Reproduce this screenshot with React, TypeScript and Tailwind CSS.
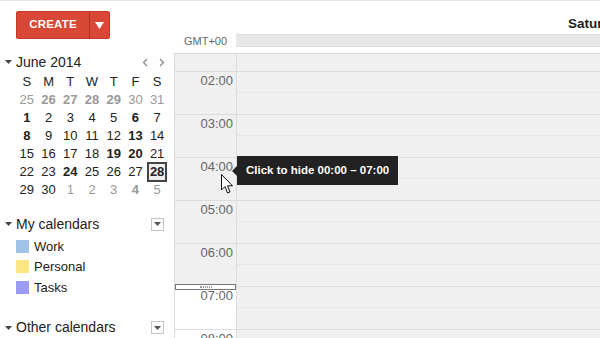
export default function App() {
  const prev = [25, 26, 27, 28, 29, 30, 31];
  const weeks: { d: number; muted?: boolean; bold?: boolean; today?: boolean }[][] = [
    prev.map((d) => ({ d, muted: true, bold: d >= 26 && d <= 29 })),
    [1, 2, 3, 4, 5, 6, 7].map((d) => ({ d, bold: d === 1 || d === 6 })),
    [8, 9, 10, 11, 12, 13, 14].map((d) => ({ d, bold: d === 8 || d === 13 })),
    [15, 16, 17, 18, 19, 20, 21].map((d) => ({ d, bold: d === 19 || d === 20 })),
    [22, 23, 24, 25, 26, 27, 28].map((d) => ({ d, bold: d === 24 || d === 28, today: d === 28 })),
    [
      { d: 29 },
      { d: 30 },
      { d: 1, muted: true },
      { d: 2, muted: true },
      { d: 3, muted: true },
      { d: 4, muted: true, bold: true },
      { d: 5, muted: true },
    ],
  ];
  const hours = ['02:00', '03:00', '04:00', '05:00', '06:00', '07:00', '08:00'];

  return (
    <div className="w-[600px] h-[338px] overflow-hidden bg-white border-t border-[#e5e5e5] flex font-['Liberation_Sans',Arial,sans-serif] text-[#222]">
      {/* sidebar */}
      <div className="w-[174px] shrink-0 flex flex-col">
        <div className="pl-[16px] pt-[10px]">
          <div className="flex w-[94px] h-[28px] rounded-[2px] bg-[#d94836] border border-[#c53727] text-white">
            <div className="w-[72px] flex items-center justify-center text-[11.5px] font-bold tracking-[0.2px]">CREATE</div>
            <div className="flex-1 border-l border-[#b0301f] flex items-center justify-center">
              <svg width="9" height="7" viewBox="0 0 9 7">
                <path d="M0 0 H9 L4.5 7 Z" fill="#fff" />
              </svg>
            </div>
          </div>
        </div>

        <div className="mt-[14px] flex items-center h-[18px]">
          <svg className="ml-[5px] mr-[4px]" width="7" height="4" viewBox="0 0 7 4">
            <path d="M0 0 H7 L3.5 4 Z" fill="#444" />
          </svg>
          <span className="text-[14px]">June 2014</span>
          <div className="ml-auto mr-[9px] flex gap-[11px] items-center">
            <svg width="6" height="9" viewBox="0 0 6 9">
              <path d="M5 1 L1.5 4.5 L5 8" stroke="#888" strokeWidth="1.3" fill="none" />
            </svg>
            <svg width="6" height="9" viewBox="0 0 6 9">
              <path d="M1 1 L4.5 4.5 L1 8" stroke="#888" strokeWidth="1.3" fill="none" />
            </svg>
          </div>
        </div>

        <div className="ml-[16px] w-[152px] mt-[1px] text-[13px]">
          <div className="grid grid-cols-7 h-[18px] items-center text-center">
            {['S', 'M', 'T', 'W', 'T', 'F', 'S'].map((d, i) => (
              <span key={i}>{d}</span>
            ))}
          </div>
          {weeks.map((w, i) => (
            <div key={i} className="grid grid-cols-7 h-[18px] items-center text-center">
              {w.map((c, j) => (
                <span
                  key={j}
                  className={
                    (c.muted ? 'text-[#999] ' : 'text-[#222] ') +
                    (c.bold ? 'font-bold ' : '') +
                    (c.today ? 'border-2 border-[#444] bg-[#eeeeee] h-[20px] leading-[16px] mx-[1px]' : '')
                  }
                >
                  {c.d}
                </span>
              ))}
            </div>
          ))}
        </div>

        <div className="mt-[17px] flex items-center h-[18px]">
          <svg className="ml-[5px] mr-[4px]" width="7" height="4" viewBox="0 0 7 4">
            <path d="M0 0 H7 L3.5 4 Z" fill="#444" />
          </svg>
          <span className="text-[14px]">My calendars</span>
          <div className="ml-auto mr-[10px] w-[13px] h-[13px] border border-[#c4c4c4] flex items-center justify-center">
            <svg width="7" height="4" viewBox="0 0 7 4">
              <path d="M0 0 H7 L3.5 4 Z" fill="#555" />
            </svg>
          </div>
        </div>
        <div className="mt-[3px] flex flex-col text-[13px]">
          {[
            ['Work', 'bg-[#a2c4ea]'],
            ['Personal', 'bg-[#fbe683]'],
            ['Tasks', 'bg-[#9b9cf8]'],
          ].map(([n, c]) => (
            <div key={n} className="flex items-center h-[20.5px] pl-[16px]">
              <span className={'w-[13px] h-[13px] mr-[5px] ' + c} />
              <span>{n}</span>
            </div>
          ))}
        </div>

        <div className="mt-[21px] flex items-center h-[18px]">
          <svg className="ml-[5px] mr-[4px]" width="7" height="4" viewBox="0 0 7 4">
            <path d="M0 0 H7 L3.5 4 Z" fill="#444" />
          </svg>
          <span className="text-[14px]">Other calendars</span>
          <div className="ml-auto mr-[10px] w-[13px] h-[13px] border border-[#c4c4c4] flex items-center justify-center">
            <svg width="7" height="4" viewBox="0 0 7 4">
              <path d="M0 0 H7 L3.5 4 Z" fill="#555" />
            </svg>
          </div>
        </div>
      </div>

      {/* day view */}
      <div className="flex-1 flex flex-col min-w-0">
        <div className="h-[32px] shrink-0 flex">
          <div className="w-[62px] shrink-0" />
          <div className="pl-[332px] pt-[13px] text-[13.5px] font-bold whitespace-nowrap">Saturday 6/28</div>
        </div>
        <div className="h-[20px] shrink-0 flex">
          <div className="w-[62px] shrink-0 text-[11px] text-[#666] pl-[10px] pt-[0px]">GMT+00</div>
          <div className="flex-1 h-[13px] mt-[1px] bg-[#e8e8e8] border-y border-[#dedede]" />
        </div>

        <div className="relative flex-1 flex border-l border-t border-[#dcdcdc] bg-[#f0f0f0]">
          <div className="w-[62px] shrink-0 border-r border-[#dcdcdc] flex flex-col">
            <div className="h-[18px] shrink-0 border-b border-[#dcdcdc]" />
            {hours.map((h) => (
              <div
                key={h}
                className={
                  'h-[43px] shrink-0 border-b border-[#dcdcdc] text-right pr-[3px] pt-[1px] text-[13px] leading-[15px] text-[#666] ' +
                  (h === '07:00' || h === '08:00' ? 'bg-white' : '')
                }
              >
                {h}
              </div>
            ))}
          </div>
          <div className="flex-1 flex flex-col">
            <div className="h-[18px] shrink-0 border-b border-[#dcdcdc]" />
            {hours.map((h) => (
              <div key={h} className="h-[43px] shrink-0 border-b border-[#dcdcdc] flex flex-col">
                <div className="h-[21px] border-b border-dotted border-[#e0e0e0]" />
              </div>
            ))}
          </div>

          {/* collapse handle */}
          <div className="absolute left-[0px] top-[230px] w-[61px] h-[6px] bg-white border border-[#777] flex items-center justify-center">
            <div className="w-[12px] h-[2px] border-y border-dotted border-[#999]" />
          </div>

          {/* tooltip */}
          <div className="absolute left-[57px] top-[102px] flex items-center">
            <svg width="5" height="10" viewBox="0 0 5 10">
              <path d="M5 0 L0 5 L5 10 Z" fill="#222" />
            </svg>
            <div className="h-[29px] bg-[#222] text-white text-[11.5px] font-bold flex items-center pl-[9px] pr-[9px] whitespace-nowrap">
              Click to hide 00:00 – 07:00
            </div>
          </div>

          {/* cursor */}
          <svg className="absolute left-[46px] top-[120px]" width="13" height="21" viewBox="0 0 13 21">
            <path d="M0.5 0.5 L0.5 16 L4 12.5 L6.5 19 L9 18 L6.5 11.8 L11.5 11.8 Z" fill="#fff" stroke="#111" strokeWidth="1" />
          </svg>
        </div>
      </div>
    </div>
  );
}
